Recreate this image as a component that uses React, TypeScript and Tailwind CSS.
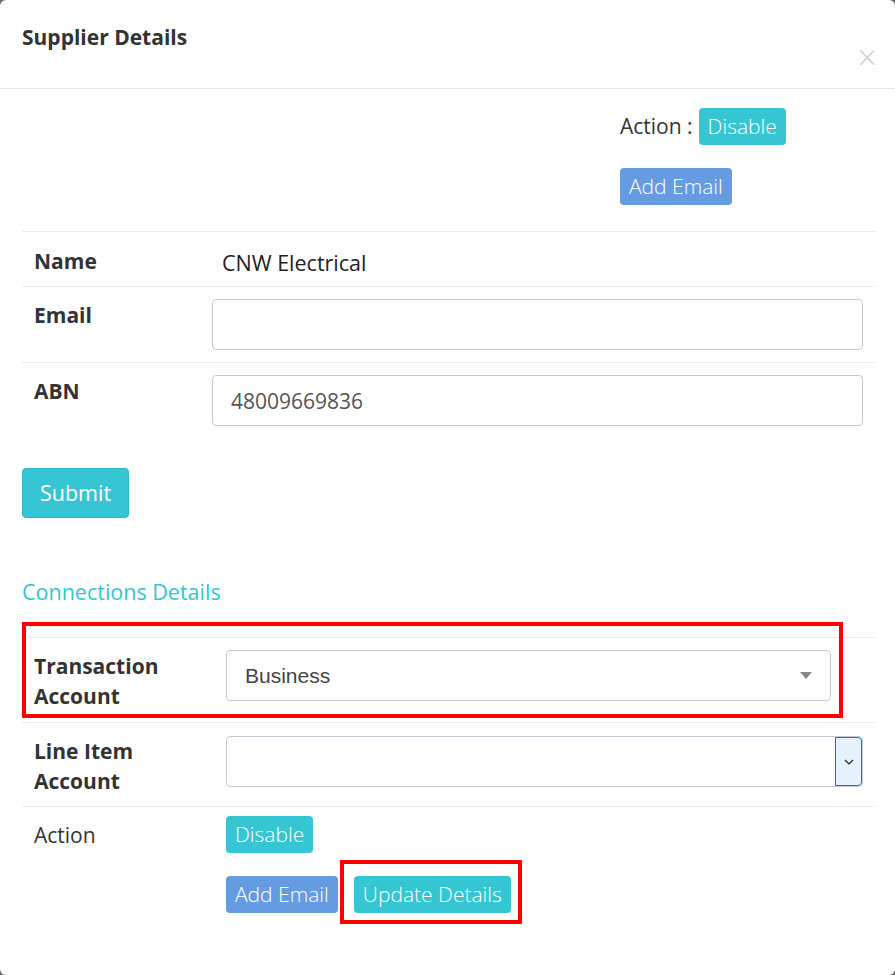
import React from 'react';

const font = { fontFamily: '"Open Sans", "Liberation Sans", sans-serif' };

function Btn({ children, blue }: { children: React.ReactNode; blue?: boolean }) {
  return (
    <button
      className={
        (blue ? 'bg-[#659be0]' : 'bg-[#36c6d3]') +
        ' text-white text-[21px] leading-[25px] px-[9px] py-[6px] rounded-[4px] font-light'
      }
    >
      {children}
    </button>
  );
}

export default function App() {
  return (
    <div className="bg-[#6b6b6b] w-[895px] h-[975px]" style={font}>
      <div className="bg-white w-full h-full rounded-[6px] text-[#333]">
        {/* header */}
        <div className="relative h-[89px] border-b border-[#e5e5e5] px-[22px] pt-[22px]">
          <h4 className="text-[21px] leading-[30px] font-bold text-[#333]">Supplier Details</h4>
          <span className="absolute right-[18px] top-[40px] text-[34px] leading-[34px] text-[#cfcfcf] font-light">×</span>
        </div>

        <div className="px-[22px] pt-[19px]">
          {/* top actions */}
          <div className="pl-[598px] h-[123px]">
            <div className="flex items-center gap-[6px] text-[21px]">
              <span>Action :</span>
              <Btn>Disable</Btn>
            </div>
            <div className="mt-[23px]">
              <Btn blue>Add Email</Btn>
            </div>
          </div>

          {/* supplier table */}
          <div className="w-[853px] text-[21px] leading-[30px]">
            <div className="flex border-t border-[#e7ecf1] h-[55px] items-start">
              <div className="w-[178px] px-[12px] pt-[14px] font-bold">Name</div>
              <div className="pt-[16px] pl-[22px] text-[21.5px] text-[#222]">CNW Electrical</div>
            </div>
            <div className="flex border-t border-[#e7ecf1] h-[76px]">
              <div className="w-[190px] px-[12px] pt-[13px] font-bold">Email</div>
              <div className="flex-1 pt-[12px] pr-[12px]">
                <div className="h-[51px] border border-[#c2cad8] rounded-[4px]" />
              </div>
            </div>
            <div className="flex border-t border-[#e7ecf1] h-[76px]">
              <div className="w-[190px] px-[12px] pt-[13px] font-bold">ABN</div>
              <div className="flex-1 pt-[12px] pr-[12px]">
                <div className="h-[51px] border border-[#c2cad8] rounded-[4px] px-[18px] flex items-center text-[#555]">
                  48009669836
                </div>
              </div>
            </div>
          </div>

          <button className="mt-[30px] bg-[#36c6d3] text-white text-[21.5px] w-[107px] h-[50px] rounded-[4px] border border-[#2bb8c4]">
            Submit
          </button>

          <div className="mt-[59px] text-[21.5px] leading-[30px] text-[#32c5d2]">Connections Details</div>

          {/* connections table */}
          <div className="relative mt-[30px] w-[853px] text-[21px] leading-[30px]">
            <div className="flex border-t border-[#e7ecf1] h-[85px]">
              <div className="w-[204px] px-[12px] pt-[13px] font-bold">
                Transaction
                <br />
                Account
              </div>
              <div className="pt-[12px] w-[605px]">
                <div
                  className="h-[51px] border border-[#c2cad8] rounded-[4px] pl-[18px] pr-[18px] flex items-center justify-between text-[#444]"
                  style={{ fontFamily: '"Liberation Sans", Arial, sans-serif' }}
                >
                  <span>Business</span>
                  <svg width="12" height="7" viewBox="0 0 12 7">
                    <path d="M0 0h12L6 7z" fill="#888" />
                  </svg>
                </div>
              </div>
            </div>
            <div className="flex border-t border-[#e7ecf1] h-[84px]">
              <div className="w-[204px] px-[12px] pt-[13px] font-bold">
                Line Item
                <br />
                Account
              </div>
              <div className="flex-1 pt-[13px] pr-[12px]">
                <div className="h-[51px] border border-[#c2cad8] rounded-[4px] flex justify-end overflow-hidden">
                  <div className="w-[27px] h-full bg-[#e5f1fb] border border-[#0078d7] rounded-r-[4px] flex items-center justify-center">
                    <svg width="10" height="6" viewBox="0 0 10 6">
                      <path d="M1 1l4 4 4-4" fill="none" stroke="#222" strokeWidth="1.2" />
                    </svg>
                  </div>
                </div>
              </div>
            </div>
            <div className="flex border-t border-[#e7ecf1] h-[130px]">
              <div className="w-[204px] px-[12px] pt-[13px] text-[21px]">Action</div>
              <div className="pt-[9px]">
                <Btn>Disable</Btn>
                <div className="mt-[23px] flex gap-[16px]">
                  <Btn blue>Add Email</Btn>
                  <Btn>Update Details</Btn>
                </div>
              </div>
            </div>

            {/* annotation boxes */}
            <div className="absolute left-0 top-[-15px] w-[821px] h-[96px] border-4 border-[#ff0000]" />
            <div className="absolute left-[318px] top-[223px] w-[182px] h-[64px] border-4 border-[#ff0000]" />
          </div>
        </div>
      </div>
    </div>
  );
}
